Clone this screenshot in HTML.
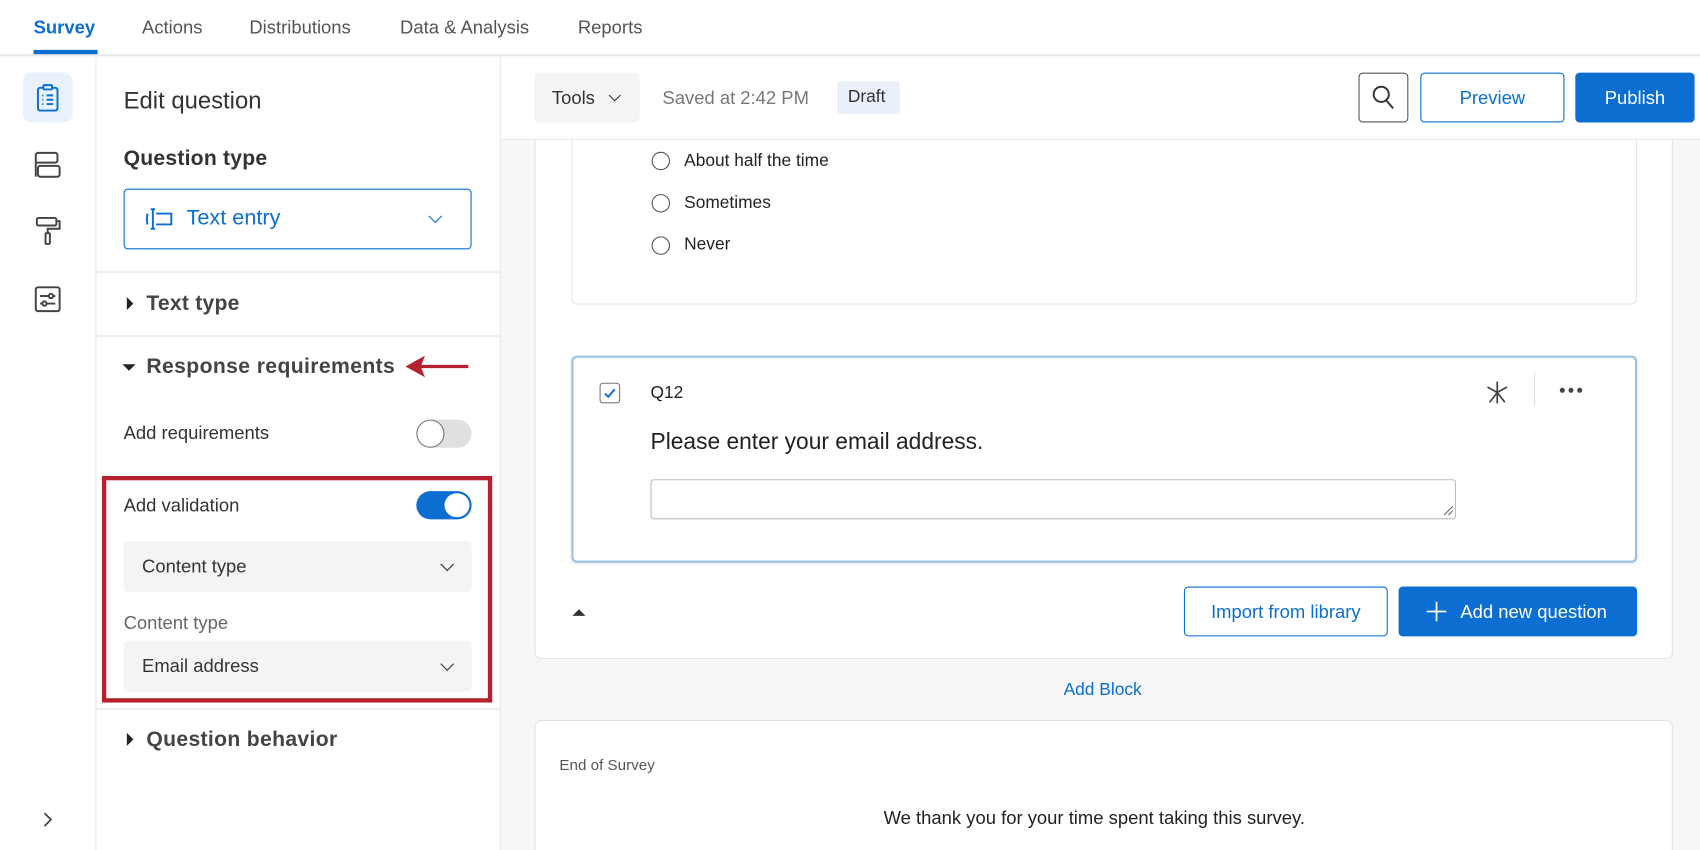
<!DOCTYPE html>
<html><head><meta charset="utf-8"><style>
html,body{margin:0;padding:0;width:1700px;height:850px;overflow:hidden;background:#fff}
#w{position:absolute;left:0;top:0;width:1568px;height:784px;overflow:hidden;transform:scale(1.08418);transform-origin:0 0;font-family:"Liberation Sans",sans-serif;color:#262626}
.a{position:absolute}
.t{position:absolute;white-space:nowrap}
.dd{position:absolute;background:#f4f4f4;border-radius:4px}
.chev{position:absolute;width:8px;height:8px;border-right:1.6px solid #333;border-bottom:1.6px solid #333;transform:rotate(45deg)}
</style></head><body><div id="w">
<div class="a" style="left:0;top:50px;width:1568px;height:2px;background:#e8e8e8"></div>
<div class="t" style="left:31px;top:16px;font-size:17px;font-weight:bold;color:#0b6ed0">Survey</div>
<div class="a" style="left:31px;top:46px;width:59px;height:4px;background:#0b6ed0"></div>
<div class="t" style="left:131px;top:16px;font-size:17px;color:#555">Actions</div>
<div class="t" style="left:230px;top:16px;font-size:17px;color:#555">Distributions</div>
<div class="t" style="left:369px;top:16px;font-size:17px;color:#555">Data &amp; Analysis</div>
<div class="t" style="left:533px;top:16px;font-size:17px;color:#555">Reports</div>
<div class="a" style="left:88px;top:52px;width:1px;height:732px;background:#e8e8e8"></div>
<div class="a" style="left:21px;top:67px;width:46px;height:46px;background:#e9f1fc;border-radius:8px"></div>
<svg class="a" style="left:30px;top:76px" width="28" height="28" viewBox="0 0 28 28" fill="none" stroke="#0b6ed0" stroke-width="1.8"><rect x="5" y="5" width="18" height="21" rx="2"/><rect x="10" y="2.5" width="8" height="4" rx="1" fill="#e9f1fc"/><path d="M9 12h1M13 12h6M9 16h1M13 16h6M9 20h1M13 20h6"/></svg>
<svg class="a" style="left:30px;top:138px" width="28" height="28" viewBox="0 0 28 28" fill="none" stroke="#444" stroke-width="1.8"><path d="M3 25V5a2 2 0 0 1 2-2h16a2 2 0 0 1 2 2v5a2 2 0 0 1-2 2H3"/><rect x="5" y="15" width="20" height="10" rx="2"/></svg>
<svg class="a" style="left:30px;top:198px" width="28" height="32" viewBox="0 0 28 32" fill="none" stroke="#444" stroke-width="1.8"><rect x="4" y="3" width="18" height="7" rx="1.5"/><path d="M22 6h3v7H14v4"/><rect x="12" y="17" width="4" height="10" rx="1"/></svg>
<svg class="a" style="left:30px;top:262px" width="28" height="28" viewBox="0 0 28 28" fill="none" stroke="#444" stroke-width="1.8"><rect x="3" y="3" width="22" height="22" rx="2"/><path d="M7 11h14M7 18h14"/><circle cx="17" cy="11" r="2" fill="#fff"/><circle cx="11" cy="18" r="2" fill="#fff"/></svg>
<svg class="a" style="left:38px;top:748px" width="12" height="16" viewBox="0 0 12 16" fill="none" stroke="#444" stroke-width="1.6"><path d="M3 2l6 6-6 6"/></svg>
<div class="a" style="left:461px;top:52px;width:1px;height:732px;background:#e8e8e8"></div>
<div class="t" style="left:114px;top:80px;font-size:22px;color:#333">Edit question</div>
<div class="t" style="left:114px;top:135px;font-size:19.5px;font-weight:bold;color:#333;letter-spacing:0.2px">Question type</div>
<div class="a" style="left:114px;top:174px;width:321px;height:56px;border:1.5px solid #0b6ed0;border-radius:4px;box-sizing:border-box"></div>
<svg class="a" style="left:133px;top:190px" width="28" height="24" viewBox="0 0 28 24" fill="none" stroke="#0b6ed0" stroke-width="1.8"><path d="M3 7q-1 5 0 10M6 3h4M8 3v18M6 21h4M11 7h14v10H11"/></svg>
<div class="t" style="left:172px;top:190px;font-size:20px;color:#0b6ed0">Text entry</div>
<div class="chev" style="left:397px;top:195px;border-color:#0b6ed0"></div>
<div class="a" style="left:89px;top:250px;width:372px;height:2px;background:#efefef"></div>
<div class="a" style="left:117px;top:274px;width:0;height:0;border-left:6px solid #222;border-top:6px solid transparent;border-bottom:6px solid transparent"></div>
<div class="t" style="left:135px;top:269px;font-size:19.5px;font-weight:bold;color:#444;letter-spacing:0.2px">Text type</div>
<div class="a" style="left:89px;top:309px;width:372px;height:2px;background:#efefef"></div>
<div class="a" style="left:113px;top:336px;width:0;height:0;border-top:6px solid #222;border-left:6px solid transparent;border-right:6px solid transparent"></div>
<div class="t" style="left:135px;top:327px;font-size:19.5px;font-weight:bold;color:#444;letter-spacing:0.35px">Response requirements</div>
<svg class="a" style="left:374px;top:326px" width="60" height="24" viewBox="0 0 60 24"><path d="M6 12H58" stroke="#b5222e" stroke-width="3"/><path d="M0 12L18 2L14 12L18 22Z" fill="#b5222e"/></svg>
<div class="t" style="left:114px;top:390px;font-size:17px;color:#333">Add requirements</div>
<div class="a" style="left:384px;top:387px;width:51px;height:26px;border-radius:13px;background:#e0e0e0"></div>
<div class="a" style="left:384px;top:387px;width:26px;height:26px;border-radius:13px;background:#fff;border:1.5px solid #777;box-sizing:border-box"></div>
<div class="a" style="left:94px;top:439px;width:360px;height:209px;border:4px solid #b5222e;box-sizing:border-box"></div>
<div class="t" style="left:114px;top:457px;font-size:17px;color:#333">Add validation</div>
<div class="a" style="left:384px;top:453px;width:51px;height:26px;border-radius:13px;background:#0b6ed0"></div>
<div class="a" style="left:410px;top:455px;width:23px;height:22px;border-radius:12px;background:#fff"></div>
<div class="dd" style="left:114px;top:499px;width:321px;height:47px"></div>
<div class="t" style="left:131px;top:513px;font-size:17px;color:#333">Content type</div>
<div class="chev" style="left:408px;top:516px"></div>
<div class="t" style="left:114px;top:565px;font-size:17px;color:#666">Content type</div>
<div class="dd" style="left:114px;top:591px;width:321px;height:47px"></div>
<div class="t" style="left:131px;top:605px;font-size:17px;color:#333">Email address</div>
<div class="chev" style="left:408px;top:608px"></div>
<div class="a" style="left:89px;top:653px;width:372px;height:2px;background:#efefef"></div>
<div class="a" style="left:117px;top:676px;width:0;height:0;border-left:6px solid #222;border-top:6px solid transparent;border-bottom:6px solid transparent"></div>
<div class="t" style="left:135px;top:671px;font-size:19.5px;font-weight:bold;color:#444;letter-spacing:0.3px">Question behavior</div>
<div class="a" style="left:462px;top:52px;width:1106px;height:732px;background:#f7f7f7"></div>
<div class="a" style="left:462px;top:52px;width:1106px;height:76px;background:#fff;border-bottom:1px solid #e6e6e6"></div>
<div class="a" style="left:493px;top:67px;width:97px;height:46px;background:#f4f4f4;border-radius:4px"></div>
<div class="t" style="left:509px;top:81px;font-size:17px;color:#333">Tools</div>
<div class="chev" style="left:563px;top:84px;width:7px;height:7px"></div>
<div class="t" style="left:611px;top:81px;font-size:17px;color:#777">Saved at 2:42 PM</div>
<div class="a" style="left:772px;top:75px;width:58px;height:30px;background:#eaf0fa;border-radius:3px"></div>
<div class="t" style="left:782px;top:81px;font-size:16px;color:#333">Draft</div>
<div class="a" style="left:1253px;top:67px;width:46px;height:46px;border:1.5px solid #555;border-radius:4px;box-sizing:border-box"></div>
<svg class="a" style="left:1264px;top:77px" width="24" height="26" viewBox="0 0 24 26" fill="none" stroke="#333" stroke-width="1.8"><circle cx="10" cy="10" r="7"/><path d="M15 16l6 7"/></svg>
<div class="a" style="left:1310px;top:67px;width:133px;height:46px;border:1.5px solid #0b6ed0;border-radius:4px;box-sizing:border-box;background:#fff"></div>
<div class="t" style="left:1310px;top:81px;width:133px;text-align:center;font-size:17px;color:#0b6ed0">Preview</div>
<div class="a" style="left:1453px;top:67px;width:110px;height:46px;background:#0b6ed0;border-radius:4px"></div>
<div class="t" style="left:1453px;top:81px;width:110px;text-align:center;font-size:17px;color:#fff">Publish</div>
<div class="a" style="left:493px;top:129px;width:1050px;height:479px;background:#fff;border:1px solid #e2e2e2;border-top:none;border-radius:0 0 6px 6px;box-sizing:border-box"></div>
<div class="a" style="left:527px;top:129px;width:983px;height:152px;border:1px solid #e2e2e2;border-top:none;border-radius:0 0 6px 6px;box-sizing:border-box"></div>
<div class="a" style="left:601px;top:140px;width:17px;height:17px;border:1.3px solid #555;border-radius:50%;box-sizing:border-box"></div>
<div class="t" style="left:631px;top:140px;font-size:16px;color:#222">About half the time</div>
<div class="a" style="left:601px;top:179px;width:17px;height:17px;border:1.3px solid #555;border-radius:50%;box-sizing:border-box"></div>
<div class="t" style="left:631px;top:179px;font-size:16px;color:#222">Sometimes</div>
<div class="a" style="left:601px;top:218px;width:17px;height:17px;border:1.3px solid #555;border-radius:50%;box-sizing:border-box"></div>
<div class="t" style="left:631px;top:217px;font-size:16px;color:#222">Never</div>
<div class="a" style="left:527px;top:328px;width:983px;height:191px;border:2px solid #9cc0e6;border-radius:5px;box-sizing:border-box;box-shadow:0 1px 3px rgba(0,0,0,.1)"></div>
<div class="a" style="left:553px;top:353px;width:19px;height:19px;border:1.3px solid #777;border-radius:3px;box-sizing:border-box"></div>
<svg class="a" style="left:556px;top:356px" width="13" height="13" viewBox="0 0 13 13" fill="none" stroke="#0b6ed0" stroke-width="1.8"><path d="M2 7l3 3 6-7"/></svg>
<div class="t" style="left:600px;top:354px;font-size:16px;color:#222">Q12</div>
<svg class="a" style="left:1369px;top:350px" width="24" height="24" viewBox="0 0 24 24" fill="none" stroke="#444" stroke-width="1.6"><path d="M12 2v20M12 12L3 7M12 12l9-5M12 12l-7 9M12 12l7 9"/></svg>
<div class="a" style="left:1415px;top:343px;width:1px;height:32px;background:#e0e0e0"></div>
<svg class="a" style="left:1437px;top:356px" width="24" height="8" viewBox="0 0 24 8" fill="#444"><circle cx="4" cy="4" r="2.3"/><circle cx="12" cy="4" r="2.3"/><circle cx="20" cy="4" r="2.3"/></svg>
<div class="t" style="left:600px;top:396px;font-size:21px;color:#222">Please enter your email address.</div>
<div class="a" style="left:600px;top:442px;width:743px;height:37px;border:1px solid #bbb;border-radius:3px;box-sizing:border-box"></div>
<svg class="a" style="left:1331px;top:466px" width="10" height="10" viewBox="0 0 10 10" stroke="#666" stroke-width="1"><path d="M1 9L9 1M5 9L9 5"/></svg>
<div class="a" style="left:528px;top:562px;width:0;height:0;border-bottom:6px solid #333;border-left:6px solid transparent;border-right:6px solid transparent"></div>
<div class="a" style="left:1092px;top:541px;width:188px;height:46px;border:1.5px solid #0b6ed0;border-radius:4px;box-sizing:border-box"></div>
<div class="t" style="left:1092px;top:555px;width:188px;text-align:center;font-size:17px;color:#0b6ed0">Import from library</div>
<div class="a" style="left:1290px;top:541px;width:220px;height:46px;background:#0b6ed0;border-radius:4px"></div>
<svg class="a" style="left:1315px;top:554px" width="20" height="20" viewBox="0 0 20 20" stroke="#fff" stroke-width="1.6"><path d="M10 1v18M1 10h18"/></svg>
<div class="t" style="left:1347px;top:555px;font-size:17px;color:#fff">Add new question</div>
<div class="t" style="left:981px;top:628px;font-size:16px;color:#0b6ed0">Add Block</div>
<div class="a" style="left:493px;top:664px;width:1050px;height:130px;background:#fff;border:1px solid #e2e2e2;border-radius:6px;box-sizing:border-box"></div>
<div class="t" style="left:516px;top:697px;font-size:14px;color:#555">End of Survey</div>
<div class="t" style="left:815px;top:745px;font-size:17px;color:#222">We thank you for your time spent taking this survey.</div>
</div></body></html>
